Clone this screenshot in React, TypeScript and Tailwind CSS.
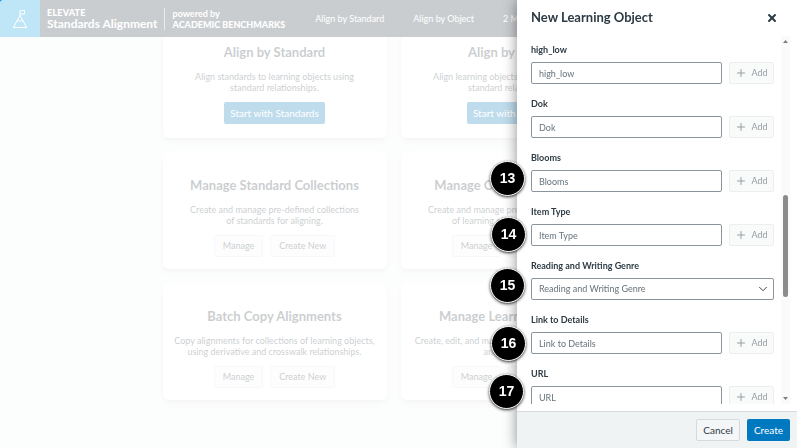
import { Plus, ChevronDown, X } from "lucide-react"

const cards = [
  {
    title: "Align by Standard",
    lines: ["Align standards to learning objects using", "standard relationships."],
    primary: "Start with Standards",
  },
  {
    title: "Align by Object",
    lines: ["Align learning objects to standards using", "standard relationships."],
    primary: "Start with Objects",
  },
  {
    title: "Manage Standard Collections",
    lines: ["Create and manage pre-defined collections", "of standards for aligning."],
  },
  {
    title: "Manage Object Collections",
    lines: ["Create and manage pre-defined collections", "of learning objects for aligning."],
  },
  {
    title: "Batch Copy Alignments",
    lines: ["Copy alignments for collections of learning objects,", "using derivative and crosswalk relationships."],
  },
  {
    title: "Manage Learning Objects",
    lines: ["Create, edit, and manage learning objects, rubrics,", "and alignment."],
  },
]

const fields = [
  { label: "high_low" },
  { label: "Dok" },
  { label: "Blooms" },
  { label: "Item Type" },
  { label: "Reading and Writing Genre", select: true },
  { label: "Link to Details" },
  { label: "URL" },
]

const steps = [
  { n: 13, place: "top-[161px] -left-[27px]" },
  { n: 14, place: "top-[217px] -left-[26px]" },
  { n: 15, place: "top-[268px] -left-[27px]" },
  { n: 16, place: "top-[326px] -left-[26px]" },
  { n: 17, place: "top-[374px] -left-[28px]" },
]

function Header() {
  return (
    <header className="fixed inset-x-0 top-0 z-10 flex h-[37px] items-center bg-[#2d3b45] text-white">
      <div className="flex h-full w-10 shrink-0 items-center justify-center bg-[#009ce0]">
        <svg width="16" height="20" viewBox="0 0 16 20" fill="none" stroke="currentColor" strokeWidth="1">
          <path d="M8 6.5 1.3 18.5h13.4L8 6.5Z" />
          <path d="M8 7V1.5h4.5v3.5H8" />
          <path d="M5 12.4 6.8 11.2 8 12.6l1.3-1.4 1.8 1.2" />
        </svg>
      </div>
      <div className="shrink-0 pl-[7px]">
        <div className="text-[9px] leading-[11px] font-black tracking-wide">ELEVATE</div>
        <div className="text-[12px] leading-[12px] font-bold">Standards Alignment</div>
      </div>
      <div className="ml-[6px] shrink-0 border-l border-white/60 pl-2">
        <div className="text-[9px] leading-[11px] font-bold">powered by</div>
        <div className="text-[9px] leading-[11px] font-black">ACADEMIC BENCHMARKS</div>
      </div>
      <nav className="ml-[30px] flex shrink-0 gap-[29px] text-[9px]">
        <a href="#standard">Align by Standard</a>
        <a href="#object">Align by Object</a>
        <a href="#more">2 More</a>
      </nav>
    </header>
  )
}

function Card({ title, lines, primary }: { title: string; lines: string[]; primary?: string }) {
  return (
    <article className="flex flex-col items-center rounded-md bg-white pt-6 pb-3 text-center shadow-md">
      <h2 className="text-[13px] leading-[18px] font-bold whitespace-nowrap">{title}</h2>
      <p className="mt-[10px] text-[9px] leading-[11px] whitespace-nowrap">
        {lines[0]}
        <br />
        {lines[1]}
      </p>
      <div className="mt-[9px] flex gap-[7px]">
        {primary ? (
          <button className="h-[22px] rounded-xs bg-[#0374b5] px-[6px] text-[10px] text-white">{primary}</button>
        ) : (
          <>
            <button className="h-[22px] rounded-xs border border-[#dfe3e5] bg-[#f5f5f5] px-2 text-[9px]">Manage</button>
            <button className="h-[22px] rounded-xs border border-[#dfe3e5] bg-[#f5f5f5] px-2 text-[9px]">Create New</button>
          </>
        )}
      </div>
    </article>
  )
}

function Field({ label, select }: { label: string; select?: boolean }) {
  const id = label.toLowerCase().replaceAll(" ", "-")
  return (
    <div className="mb-[14px]">
      <label htmlFor={id} className="block text-[9px] leading-3 font-bold">
        {label}
      </label>
      <div className="relative mt-[6px] flex gap-[7px]">
        {select ? (
          <>
            <select
              id={id}
              className="h-[22px] w-full appearance-none rounded-xs border border-[#8b959e] bg-white px-[7px] text-[9px] text-[#66737c]"
            >
              <option>{label}</option>
            </select>
            <ChevronDown className="pointer-events-none absolute top-1 right-1 h-[14px] w-[14px]" strokeWidth={1.6} aria-hidden />
          </>
        ) : (
          <>
            <input
              id={id}
              placeholder={label}
              className="h-[22px] min-w-0 flex-1 rounded-xs border border-[#8b959e] bg-white px-[7px] text-[9px] placeholder:text-[#66737c]"
            />
            <button
              disabled
              className="flex h-[22px] w-[45px] items-center justify-center gap-1 rounded-xs border border-[#eceeef] bg-[#f9fafa] text-[9px] text-[#959da2]"
            >
              <Plus className="h-3 w-3" aria-hidden />
              Add
            </button>
          </>
        )}
      </div>
    </div>
  )
}

function Drawer() {
  return (
    <aside className="fixed inset-y-0 right-0 z-30 flex w-[280px] flex-col bg-white shadow-[0_0_13px_rgba(0,0,0,0.45)]">
      <div className="flex h-9 shrink-0 items-center justify-between pr-[19px] pl-[14px]">
        <h1 className="text-[13px] font-bold">New Learning Object</h1>
        <button aria-label="Close">
          <X className="h-3 w-3" strokeWidth={4} />
        </button>
      </div>
      <div className="mb-[7px] flex min-h-0 flex-1 pr-[7px] pl-[14px]">
        <form className="min-w-0 flex-1 overflow-hidden pt-2 pr-[7px]">
          {fields.map((field) => (
            <Field key={field.label} {...field} />
          ))}
        </form>
        <div className="flex w-[9px] flex-col items-center justify-between bg-[#fafafa] py-1" aria-hidden>
          <svg width="5" height="3" className="fill-[#7b7b7b]">
            <path d="M0 3 2.5 0 5 3Z" />
          </svg>
          <div className="mt-[52px] h-[102px] w-[5px] rounded-full bg-[#8b8b8b]" />
          <svg width="5" height="3" className="fill-[#7b7b7b]">
            <path d="M0 0h5L2.5 3Z" />
          </svg>
        </div>
      </div>
      <footer className="flex shrink-0 justify-end gap-[7px] border-t border-[#d5dadd] bg-[#f0f3f4] p-[7px] text-[10px]">
        <button className="h-[22px] rounded-xs border border-[#d5dadd] bg-[#f5f6f7] px-[6px]">Cancel</button>
        <button className="h-[22px] rounded-xs bg-[#0079c1] px-[7px] text-white">Create</button>
      </footer>
      {steps.map(({ n, place }) => (
        <span
          key={n}
          className={`absolute ${place} flex h-[35px] w-[35px] items-center justify-center rounded-full border border-white bg-black font-['Liberation_Sans',sans-serif] text-[14px] font-bold text-white shadow-[0_1px_3px_rgba(0,0,0,0.8)]`}
        >
          {n}
        </span>
      ))}
    </aside>
  )
}

export default function App() {
  return (
    <div className="min-h-screen bg-[#f3f6f5] font-[Lato,sans-serif] text-[#2d3b45]">
      <Header />
      <main className="flex justify-center pt-[19px] pr-[10px]">
        <div className="grid grid-cols-[224px_224px] grid-rows-[119px_117px_117px] gap-[14px]">
          {cards.map((card) => (
            <Card key={card.title} {...card} />
          ))}
        </div>
      </main>
      <div className="fixed inset-0 z-20 rounded-tl-[3px] bg-white/75" />
      <Drawer />
    </div>
  )
}
